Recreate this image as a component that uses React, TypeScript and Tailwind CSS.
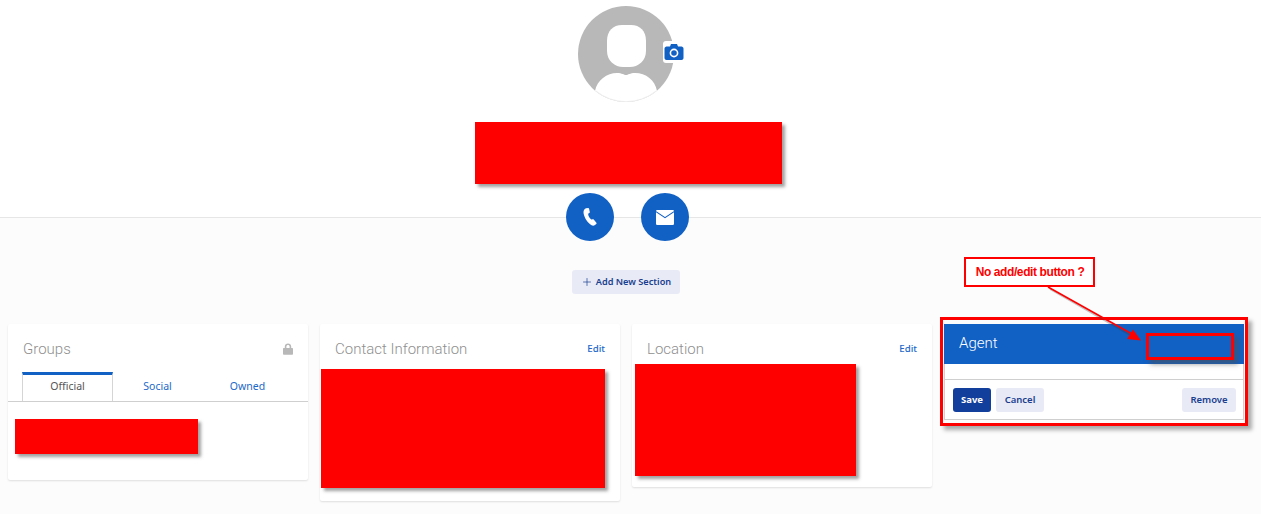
import { Plus } from 'lucide-react';

const RedBlock = ({ className }: { className: string }) => (
  <div className={`bg-[#ff0000] shadow-[3px_3px_3px_rgba(70,70,70,0.5)] ${className}`} />
);

const Avatar = () => (
  <svg width="96" height="96" viewBox="0 0 96 96">
    <defs>
      <clipPath id="avatar-clip">
        <circle cx="48" cy="48" r="48" />
      </clipPath>
    </defs>
    <circle cx="48" cy="48" r="48" fill="#b8b8b8" />
    <g clipPath="url(#avatar-clip)">
      <path d="M44 19 H53 C62 19 68 25 68 35 V45 C68 55 60 61 52 61 H45 C37 61 29 55 29 45 V35 C29 25 35 19 44 19 Z" fill="#fff" />
      <path d="M14 100 L17 85 C19 74 29 67 39 67 C44 67 46 69 48 69 C50 69 52 67 57 67 C68 67 77 74 79 85 L82 100 Z" fill="#fff" />
    </g>
    <path d="M18 85 A47.5 47.5 0 0 0 78 85" fill="none" stroke="#e8e8e8" strokeWidth="0.8" />
  </svg>
);

const CameraBadge = () => (
  <span className="absolute left-[85px] top-[35px] flex h-[22px] w-[22px] items-center justify-center rounded-[3px] bg-white">
    <svg width="20" height="18" viewBox="0 0 20 18">
      <path d="M2.5 3.5 H6 L7 1 H13 L14 3.5 H17.5 C18.5 3.5 19.5 4.5 19.5 5.5 V15 C19.5 16 18.5 17 17.5 17 H2.5 C1.5 17 0.5 16 0.5 15 V5.5 C0.5 4.5 1.5 3.5 2.5 3.5 Z" fill="#1160c4" />
      <circle cx="10" cy="10" r="3.6" fill="none" stroke="#fff" strokeWidth="1.6" />
    </svg>
  </span>
);

const RoundButton = ({ children }: { children: React.ReactNode }) => (
  <button className="flex h-12 w-12 items-center justify-center rounded-full bg-[#1160c4]">{children}</button>
);

const CardHeader = ({ title, right }: { title: string; right: React.ReactNode }) => (
  <div className="flex h-[50px] items-center justify-between px-[15px]">
    <h3 className="font-['Roboto'] text-[15px] font-light text-[#8f8f8f]">{title}</h3>
    {right}
  </div>
);

const EditLink = () => <a className="text-[9.7px] font-medium text-[#1c68c8]">Edit</a>;

const Card = ({ height, children }: { height: string; children: React.ReactNode }) => (
  <div className={`w-[300px] rounded-[2px] bg-white shadow-[0_1px_2px_rgba(0,0,0,0.12)] ${height}`}>{children}</div>
);

export default function App() {
  return (
    <div className="relative h-[514px] w-[1261px] overflow-hidden bg-[#fcfcfc] font-['Noto_Sans',sans-serif]">
      {/* Profile header */}
      <header className="flex h-[218px] flex-col items-center border-b border-[#e6e6e6] bg-white pr-[9px] pt-[6px]">
        <div className="relative h-24 w-24">
          <Avatar />
          <CameraBadge />
        </div>
        <RedBlock className="relative left-[2.5px] mt-5 h-[62px] w-[307px] shrink-0" />
        <div className="z-10 mt-[9px] flex shrink-0 gap-[27px] pl-[3px]">
          <RoundButton>
            <svg width="14" height="18" viewBox="0 0 14 18">
              <path d="M3 0.3 L5.2 0 C5.6 0 5.9 0.2 6 0.6 L6.8 4 C6.9 4.4 6.7 4.7 6.4 4.9 L5.1 5.8 C5.3 8 6.5 10.2 8.2 11.6 L9.7 11.2 C10.1 11.1 10.4 11.2 10.7 11.5 L13.4 14.8 C13.7 15.2 13.7 15.6 13.3 15.9 L11.6 17.2 C10.8 17.8 9.6 17.8 8.6 17.2 C4.6 14.8 1.6 10.2 0.6 5.4 C0.2 3.2 1 1.2 3 0.3 Z" fill="#fff" />
            </svg>
          </RoundButton>
          <RoundButton>
            <svg width="18" height="15" viewBox="0 0 18 15">
              <rect width="18" height="15" rx="1.2" fill="#fff" />
              <path d="M0 1.6 L9 7.6 L18 1.6" fill="none" stroke="#1160c4" strokeWidth="1.1" />
            </svg>
          </RoundButton>
        </div>
      </header>

      {/* Add section */}
      <div className="flex justify-center pr-[9px] pt-[52px]">
        <button className="flex h-6 w-[108px] items-center justify-center gap-[3px] rounded-[3px] bg-[#e8eaf6] text-[9.2px] font-semibold text-[#1a3f8f]">
          <Plus size={12} strokeWidth={1.4} />
          Add New Section
        </button>
      </div>

      {/* Cards */}
      <div className="flex items-start gap-3 pl-2 pt-[30px]">
        <Card height="h-[156px]">
          <CardHeader
            title="Groups"
            right={
              <svg width="10" height="12" viewBox="0 0 10 12">
                <path d="M1.8 5 V3.4 C1.8 1.6 3.2 0.4 5 0.4 C6.8 0.4 8.2 1.6 8.2 3.4 V5 H9.2 C9.7 5 10 5.3 10 5.8 V11 C10 11.5 9.7 11.8 9.2 11.8 H0.8 C0.3 11.8 0 11.5 0 11 V5.8 C0 5.3 0.3 5 0.8 5 Z M3.4 5 H6.6 V3.4 C6.6 2.5 5.9 1.9 5 1.9 C4.1 1.9 3.4 2.5 3.4 3.4 Z" fill="#b8b8b8" fillRule="evenodd" />
              </svg>
            }
          />
          <div className="-mt-[2px] flex h-[30px] border-b border-[#cfcfcf] pl-[14px] text-[10.5px] text-[#1c68c8]">
            <span className="flex h-[29px] w-[91px] items-center justify-center border-x border-t-[3px] border-x-[#d5d5d5] border-t-[#1160c4] bg-white pb-[2px] text-[#555]">
              Official
            </span>
            <span className="flex w-[89px] items-center justify-center">Social</span>
            <span className="flex w-[91px] items-center justify-center">Owned</span>
          </div>
          <RedBlock className="ml-[7px] mt-[17px] h-[35px] w-[183px]" />
        </Card>

        <Card height="h-[177px]">
          <CardHeader title="Contact Information" right={<EditLink />} />
          <RedBlock className="-mt-[5px] ml-[1px] h-[119px] w-[284px]" />
        </Card>

        <Card height="h-[163px]">
          <CardHeader title="Location" right={<EditLink />} />
          <RedBlock className="-mt-[10px] ml-[3px] h-[112px] w-[221px]" />
        </Card>

        <div className="h-[96px] w-[300px] border-x border-b border-[#cfcfcf] bg-white">
          <div className="-mx-px flex h-10 items-center bg-[#1160c4] pb-[2px] pl-[15px] font-['Roboto'] text-[15px] font-light text-white">
            Agent
          </div>
          <div className="mt-[15px] flex items-center justify-between border-t border-[#cfcfcf] pl-2 pr-[7px] pt-2">
            <div className="flex gap-[5px]">
              <button className="h-6 w-[38px] rounded-[3px] bg-[#123e9c] text-[9.5px] font-bold text-white">Save</button>
              <button className="h-6 w-[48px] rounded-[3px] bg-[#e8eaf6] text-[9.5px] font-semibold text-[#1a3f8f]">Cancel</button>
            </div>
            <button className="h-6 w-[54px] rounded-[3px] bg-[#e8eaf6] text-[9.5px] font-semibold text-[#1a3f8f]">Remove</button>
          </div>
        </div>
      </div>

      {/* Annotations laid over the screenshot */}
      <div className="absolute left-[964px] top-[257px] flex h-[30px] w-[131px] items-center justify-center border-2 border-[#ff0000] bg-white pl-[1px] font-['Liberation_Sans'] text-[12px] font-bold tracking-[-0.4px] text-[#ff0000]">
        No add/edit button ?
      </div>
      <div className="absolute left-[940px] top-[317px] h-[109px] w-[308px] border-[3px] border-[#ff0000] shadow-[4px_4px_4px_rgba(70,70,70,0.45)]" />
      <div className="absolute left-[1146px] top-[333px] h-[27px] w-[88px] border-[3px] border-[#ff0000] bg-[#1160c4] shadow-[4px_4px_5px_rgba(80,80,80,0.6)]" />
      <svg className="absolute left-[1040px] top-[280px]" width="115" height="70" viewBox="0 0 115 70">
        <line x1="10" y1="9" x2="92" y2="56" stroke="rgba(60,60,60,0.3)" strokeWidth="2" />
        <line x1="8" y1="7" x2="92" y2="54" stroke="#ff0000" strokeWidth="1.6" />
        <polygon points="101,60.5 87,59 93,49.5" fill="#ff0000" />
      </svg>
    </div>
  );
}
